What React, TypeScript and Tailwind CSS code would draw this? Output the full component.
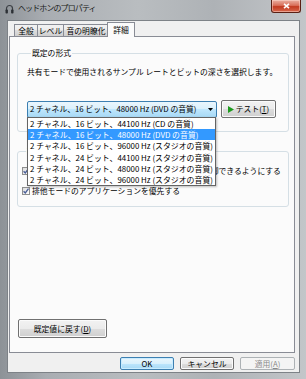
import React from "react";

const formats = [
  "2 チャネル、16 ビット、44100 Hz (CD の音質)",
  "2 チャネル、16 ビット、48000 Hz (DVD の音質)",
  "2 チャネル、16 ビット、96000 Hz (スタジオの音質)",
  "2 チャネル、24 ビット、44100 Hz (スタジオの音質)",
  "2 チャネル、24 ビット、48000 Hz (スタジオの音質)",
  "2 チャネル、24 ビット、96000 Hz (スタジオの音質)",
];

const tabs = [
  { label: "全般", w: "w-[24px]" },
  { label: "レベル", w: "w-[27px]" },
  { label: "音の明瞭化", w: "w-[46px]" },
];

function VButton({
  children,
  className = "",
}: {
  children: React.ReactNode;
  className?: string;
}) {
  return (
    <div
      className={
        "flex items-center justify-center rounded-[2px] border border-[#707070] bg-[linear-gradient(#f2f2f2,#ebebeb_50%,#dddddd_50%,#cfcfcf)] shadow-[inset_0_0_0_1px_#fbfbfb] " +
        className
      }
    >
      {children}
    </div>
  );
}

function Check({ label }: { label: string }) {
  return (
    <div className="flex h-[10px] items-center gap-[2px] pl-[4px]">
      <div className="flex h-[8px] w-[8px] items-center justify-center border border-[#8e8f8f] bg-[linear-gradient(135deg,#dcdcdc,#ffffff)]">
        <svg width="6" height="6" viewBox="0 0 6 6">
          <path d="M0.6 3.2 L2.3 5 L5.5 0.6" stroke="#4a5f97" strokeWidth="1.3" fill="none" />
        </svg>
      </div>
      <span className="whitespace-nowrap">{label}</span>
    </div>
  );
}

export default function App() {
  return (
    <div className="flex h-[379px] w-[306px] flex-col overflow-hidden bg-[linear-gradient(to_right,#8d9297,#a9adb2_15%,#b9bdc0_45%,#aeb2b6_70%,#c3c6c9)] pb-[6px] pl-[7px] pr-[6px] font-['Noto_Sans_CJK_JP',sans-serif] text-[7.8px] leading-[10px] text-black">
      {/* title bar */}
      <div className="-ml-[7px] -mr-[6px] flex h-[20px] shrink-0 items-start">
        <svg className="ml-[5px] mt-[4px]" width="9" height="10" viewBox="0 0 9 10">
          <path d="M1.5 6 V4.5 A3 3 0 0 1 7.5 4.5 V6" stroke="#3b3f44" strokeWidth="1.2" fill="none" />
          <rect x="0.5" y="5.5" width="2.4" height="4" rx="0.8" fill="#2c3035" />
          <rect x="6.1" y="5.5" width="2.4" height="4" rx="0.8" fill="#2c3035" />
        </svg>
        <span className="ml-[4px] mt-[3px] text-[8px] tracking-[-0.9px] text-[#1b1d20]">
          ヘッドホンのプロパティ
        </span>
        <div className="ml-auto mr-[5px] flex h-[13px] w-[30px] items-center justify-center rounded-b-[3px] border border-t-0 border-[#5a2014] bg-[linear-gradient(#eab0a2,#d9705b_45%,#c23a20_55%,#d7694e)] shadow-[inset_0_0_0_1px_rgba(255,220,210,0.5)]">
          <svg width="7" height="6" viewBox="0 0 7 6">
            <path d="M1 0.8 L6 5.2 M6 0.8 L1 5.2" stroke="#ffffff" strokeWidth="1.6" />
          </svg>
        </div>
      </div>

      {/* client area */}
      <div className="flex min-h-0 flex-1 flex-col border border-[#7d8287] bg-[#f0f0f0] pb-[2px] pl-[1px] pr-[4px] pt-[1px]">
        {/* tabs */}
        <div className="relative z-10 flex h-[15px] shrink-0 items-end pl-[5px]">
          {tabs.map((t) => (
            <div
              key={t.label}
              className={
                "mb-[1px] -mr-px flex h-[12px] items-center justify-center border border-b-0 border-[#898c95] bg-[linear-gradient(#f2f2f2,#ebebeb_50%,#dddddd_50%,#cfcfcf)] whitespace-nowrap " +
                t.w
              }
            >
              {t.label}
            </div>
          ))}
          <div className="-ml-px flex h-[15px] w-[28px] items-start justify-center border border-b-0 border-[#898c95] bg-[#fbfbfb] pt-[2px]">
            詳細
          </div>
        </div>

        {/* panel */}
        <div className="relative -mt-px flex flex-1 flex-col border border-[#898c95] bg-[#fbfbfb] pb-[14px] pl-[7px] pr-[5px] pt-[11px]">
          <fieldset className="rounded-[3px] border border-[#d5dfe5] pb-[13px] pl-[9px]">
            <legend className="ml-[4px] px-[1px] leading-[10px]">既定の形式</legend>
            <div className="mt-[9px] whitespace-nowrap">
              共有モードで使用されるサンプル レートとビットの深さを選択します。
            </div>
            <div className="relative mt-[23px] flex items-center">
              <div className="flex h-[17px] w-[190px] items-center rounded-[2px] border border-[#3c7fb1] bg-[linear-gradient(#eaf6fd,#d9f0fc_50%,#bee6fd_50%,#a7d9f5)] pl-[2px] pr-[3px]">
                <span className="whitespace-nowrap">{formats[1]}</span>
                <svg className="ml-auto" width="5" height="3" viewBox="0 0 5 3">
                  <path d="M0 0 H5 L2.5 3 Z" fill="#000" />
                </svg>
              </div>
              <VButton className="ml-[4px] h-[18px] w-[55px] gap-[2px]">
                <svg width="6" height="7" viewBox="0 0 6 7">
                  <path d="M0 0 L6 3.5 L0 7 Z" fill="#1e9b1e" />
                </svg>
                <span>
                  テスト(<span className="underline">T</span>)
                </span>
              </VButton>

              {/* open dropdown list */}
              <div className="absolute left-0 top-[17px] z-20 w-[189px] border border-[#646464] bg-white shadow-[1px_1px_2px_rgba(0,0,0,0.25)]">
                {formats.map((f, i) => (
                  <div
                    key={f}
                    className={
                      i === 1
                        ? "h-[11.2px] whitespace-nowrap bg-[#3399ff] pl-[2px] text-[7.9px] leading-[11.2px] text-white"
                        : "h-[11.2px] whitespace-nowrap pl-[2px] text-[7.9px] leading-[11.2px]"
                    }
                  >
                    {f}
                  </div>
                ))}
              </div>
            </div>
          </fieldset>

          <fieldset className="mt-[14px] rounded-[3px] border border-[#d5dfe5] pb-[10px]">
            <legend className="ml-[8px] px-[1px] leading-[10px]">排他モード</legend>
            <div className="mt-[10px] flex flex-col gap-[10px]">
              <Check label="アプリケーションによりこのデバイスを排他的に制御できるようにする" />
              <Check label="排他モードのアプリケーションを優先する" />
            </div>
          </fieldset>

          <VButton className="ml-[1px] mt-auto h-[19px] w-[89px]">
            <span>
              既定値に戻す(<span className="underline">D</span>)
            </span>
          </VButton>
        </div>

        {/* dialog buttons */}
        <div className="mt-[4px] flex h-[13px] shrink-0 justify-end gap-[6px]">
          <div className="flex w-[54px] items-center justify-center rounded-[2px] border border-[#3c7fb1] bg-[linear-gradient(#eaf6fd,#d9f0fc_50%,#bee6fd_50%,#a7d9f5)] shadow-[inset_0_0_0_1px_#c9ecff]">
            OK
          </div>
          <VButton className="w-[54px]">キャンセル</VButton>
          <div className="flex w-[55px] items-center justify-center rounded-[2px] border border-[#adb2b5] bg-[#f4f4f4] text-[#8a8a8a]">
            <span>
              適用(<span className="underline">A</span>)
            </span>
          </div>
        </div>
      </div>
    </div>
  );
}
